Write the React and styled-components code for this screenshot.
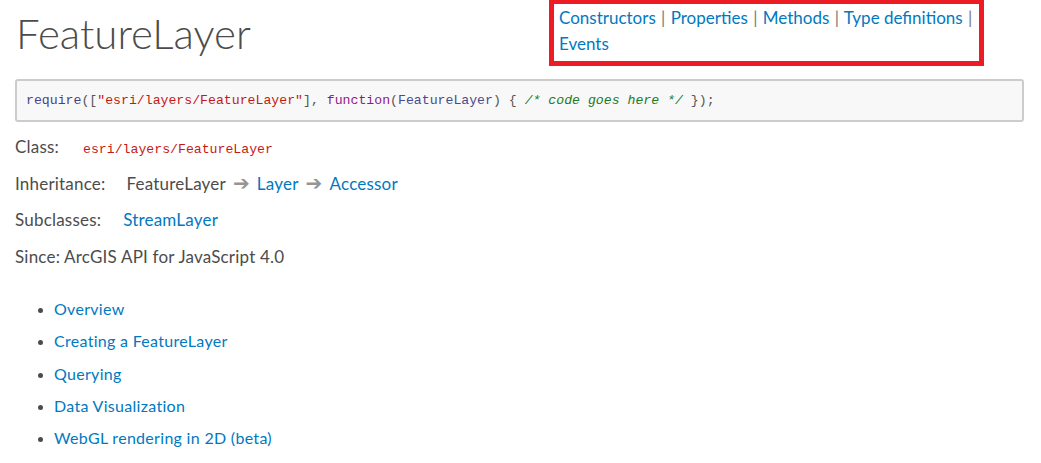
import React from 'react';
import styled, { createGlobalStyle } from 'styled-components';

const colors = {
  text: '#4c4c4c',
  link: '#0079c1',
  arrow: '#959595',
  highlight: '#ed1c24',
};

const GlobalStyle = createGlobalStyle`
  html, body {
    margin: 0;
    padding: 0;
    background: #fff;
  }
  body {
    font-family: Lato, "Open Sans", sans-serif;
    color: ${colors.text};
  }
`;

const Page = styled.div`
  padding: 0 17px 0 15px;
`;

const Header = styled.header`
  display: flex;
  justify-content: space-between;
  align-items: flex-start;
  padding-right: 40px;
`;

const Title = styled.h1`
  margin: 7px 0 0 1px;
  font-size: 42px;
  line-height: 52px;
  font-weight: 300;
  color: ${colors.text};
`;

const TopNav = styled.nav`
  width: 420px;
  margin-top: -1px;
  padding: 1px 0 4px 5px;
  border: 5px solid ${colors.highlight};
  font-size: 17px;
  line-height: 26px;
`;

const NavLink = styled.a`
  color: ${colors.link};
  text-decoration: none;
  white-space: nowrap;
`;

const Pipe = styled.span`
  color: #7a7a7a;
  margin: 0 1px;
`;

const CodeBlock = styled.pre`
  margin: 13px 0 0;
  padding: 11px 10px 10px 9px;
  background: #f8f8f8;
  border: 2px solid #cccccc;
  border-radius: 3px;
  font-family: "Liberation Mono", monospace;
  font-size: 13.2px;
  line-height: 18px;
  color: #555;
`;

const Tok = styled.span`
  color: ${p => p.c};
  font-style: ${p => (p.italic ? 'italic' : 'normal')};
`;

const Meta = styled.div`
  display: flex;
  flex-direction: column;
  gap: 12.7px;
  margin-top: 13px;
  font-size: 17px;
  letter-spacing: 0.2px;
  line-height: 24px;
`;

const MetaRow = styled.div`
  display: flex;
  align-items: baseline;
  height: 24px;
`;

const Label = styled.span`
  margin-right: ${p => p.gap || 0}px;
`;

const Mono = styled.code`
  font-family: "Liberation Mono", monospace;
  font-size: 13.2px;
  letter-spacing: 0;
  color: #c41a16;
`;

const Link = styled.a`
  color: ${colors.link};
  text-decoration: none;
`;

const Arrow = styled.span`
  color: ${colors.arrow};
  margin: 0 7px;
  font-family: "DejaVu Sans", sans-serif;
  font-size: 20px;
  line-height: 0;
`;

const Toc = styled.ul`
  margin: 28px 0 0;
  padding-left: 39px;
  display: flex;
  flex-direction: column;
  gap: 8.3px;
  font-size: 16px;
  letter-spacing: 0.3px;
  line-height: 24px;
`;

const TocItem = styled.li`
  color: ${colors.text};
  &::marker {
    font-size: 14px;
  }
`;

const navItems = ['Constructors', 'Properties', 'Methods', 'Type definitions', 'Events'];
const tocItems = [
  'Overview',
  'Creating a FeatureLayer',
  'Querying',
  'Data Visualization',
  'WebGL rendering in 2D (beta)',
];

export default function App() {
  return (
    <Page>
      <GlobalStyle />
      <Header>
        <Title>FeatureLayer</Title>
        <TopNav>
          {navItems.map((item, i) => (
            <React.Fragment key={item}>
              <NavLink href="#">{item}</NavLink>
              {i < navItems.length - 1 && (
                <>
                  {' '}
                  <Pipe>|</Pipe>{' '}
                </>
              )}
            </React.Fragment>
          ))}
        </TopNav>
      </Header>

      <CodeBlock>
        <Tok c="#4a3f8c">require</Tok>
        <Tok c="#555">([</Tok>
        <Tok c="#c41a16">"esri/layers/FeatureLayer"</Tok>
        <Tok c="#555">], </Tok>
        <Tok c="#8b1a8b">function</Tok>
        <Tok c="#555">(</Tok>
        <Tok c="#4a4a8c">FeatureLayer</Tok>
        <Tok c="#555">) {'{'} </Tok>
        <Tok c="#1d7a1d" italic>/* code goes here */</Tok>
        <Tok c="#555"> {'}'});</Tok>
      </CodeBlock>

      <Meta>
        <MetaRow>
          <Label gap={24}>Class:</Label>
          <Mono>esri/layers/FeatureLayer</Mono>
        </MetaRow>
        <MetaRow>
          <Label gap={21}>Inheritance:</Label>
          <span>FeatureLayer</span>
          <Arrow>➔</Arrow>
          <Link href="#">Layer</Link>
          <Arrow>➔</Arrow>
          <Link href="#">Accessor</Link>
        </MetaRow>
        <MetaRow>
          <Label gap={22}>Subclasses:</Label>
          <Link href="#">StreamLayer</Link>
        </MetaRow>
        <MetaRow>
          <Label gap={4}>Since:</Label>
          <span>ArcGIS API for JavaScript 4.0</span>
        </MetaRow>
      </Meta>

      <Toc>
        {tocItems.map(item => (
          <TocItem key={item}>
            <Link href="#">{item}</Link>
          </TocItem>
        ))}
      </Toc>
    </Page>
  );
}
